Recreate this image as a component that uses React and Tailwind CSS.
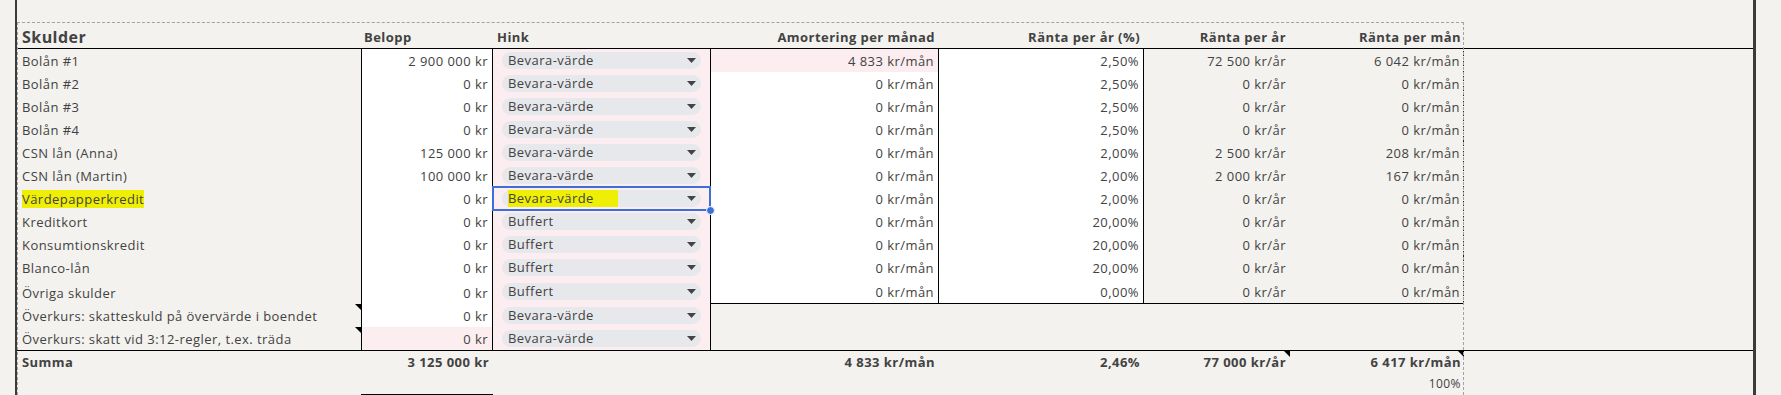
import React from "react";

// Skulder-tabell, kalkylbladsstil
const COLS =
  "grid grid-cols-[344px_132px_218px_228px_205px_146px_174px_289px]";

const rows = [
  { name: "Bolån #1", belopp: "2 900 000 kr", hink: "Bevara-värde", amort: "4 833 kr/mån", rate: "2,50%", ar: "72 500 kr/år", man: "6 042 kr/mån", amortPink: true },
  { name: "Bolån #2", belopp: "0 kr", hink: "Bevara-värde", amort: "0 kr/mån", rate: "2,50%", ar: "0 kr/år", man: "0 kr/mån" },
  { name: "Bolån #3", belopp: "0 kr", hink: "Bevara-värde", amort: "0 kr/mån", rate: "2,50%", ar: "0 kr/år", man: "0 kr/mån" },
  { name: "Bolån #4", belopp: "0 kr", hink: "Bevara-värde", amort: "0 kr/mån", rate: "2,50%", ar: "0 kr/år", man: "0 kr/mån" },
  { name: "CSN lån (Anna)", belopp: "125 000 kr", hink: "Bevara-värde", amort: "0 kr/mån", rate: "2,00%", ar: "2 500 kr/år", man: "208 kr/mån" },
  { name: "CSN lån (Martin)", belopp: "100 000 kr", hink: "Bevara-värde", amort: "0 kr/mån", rate: "2,00%", ar: "2 000 kr/år", man: "167 kr/mån" },
  { name: "Värdepapperkredit", belopp: "0 kr", hink: "Bevara-värde", amort: "0 kr/mån", rate: "2,00%", ar: "0 kr/år", man: "0 kr/mån", selected: true },
  { name: "Kreditkort", belopp: "0 kr", hink: "Buffert", amort: "0 kr/mån", rate: "20,00%", ar: "0 kr/år", man: "0 kr/mån" },
  { name: "Konsumtionskredit", belopp: "0 kr", hink: "Buffert", amort: "0 kr/mån", rate: "20,00%", ar: "0 kr/år", man: "0 kr/mån" },
  { name: "Blanco-lån", belopp: "0 kr", hink: "Buffert", amort: "0 kr/mån", rate: "20,00%", ar: "0 kr/år", man: "0 kr/mån" },
  { name: "Övriga skulder", belopp: "0 kr", hink: "Buffert", amort: "0 kr/mån", rate: "0,00%", ar: "0 kr/år", man: "0 kr/mån", tall: true },
  { name: "Överkurs: skatteskuld på övervärde i boendet", belopp: "0 kr", hink: "Bevara-värde", extra: true, note: true },
  { name: "Överkurs: skatt vid 3:12-regler, t.ex. träda", belopp: "0 kr", hink: "Bevara-värde", extra: true, note: true, beloppPink: true },
];

const Note = () => (
  <span className="absolute top-0 right-0 w-0 h-0 border-l-[6px] border-l-transparent border-t-[6px] border-t-black" />
);

const Chip = ({ label, highlight }) => (
  <div className="flex items-center justify-between h-[17px] rounded-full bg-[#e7e8eb] pl-[6px] pr-[5px]">
    <span className={highlight ? "bg-[#efef05] pr-[24px] leading-[17px]" : "leading-[17px]"}>
      {label}
    </span>
    <svg width="9" height="5" viewBox="0 0 9 5">
      <polygon points="0,0 9,0 4.5,5" fill="#444" />
    </svg>
  </div>
);

export default function App() {
  const cell = "flex items-end pb-[2px] leading-[18px]";
  return (
    <div className="min-h-screen w-full flex bg-[#f3f2ef] text-[#424242] text-[13px] tracking-[0.45px] font-['Open_Sans','Noto_Sans',sans-serif] overflow-hidden">
      <div className="w-[15px] shrink-0" />
      <div className="w-[2px] shrink-0 bg-[#3b3b3b]" />
      <div className="relative w-[1736px] shrink-0">
        <div className="h-[22px]" />

        {/* rubriker */}
        <div className={`${COLS} h-[27px] border-b border-black font-bold`}>
          <div className={`${cell} pl-[5px] text-[16px]`}>Skulder</div>
          <div className={`${cell} pl-[3px]`}>Belopp</div>
          <div className={`${cell} pl-[4px]`}>Hink</div>
          <div className={`${cell} justify-end pr-[4px]`}>Amortering per månad</div>
          <div className={`${cell} justify-end pr-[4px]`}>Ränta per år (%)</div>
          <div className={`${cell} justify-end pr-[4px]`}>Ränta per år</div>
          <div className={`${cell} justify-end pr-[3px]`}>Ränta per mån</div>
          <div />
        </div>

        {rows.map((r) => (
          <div key={r.name} className={`${COLS} ${r.tall ? "h-[25px]" : "h-[23px]"}`}>
            <div className={`${cell} relative pl-[5px] whitespace-nowrap`}>
              <span className={r.selected ? "bg-[#efef05]" : ""}>{r.name}</span>
              {r.note && <Note />}
            </div>
            <div className={`${cell} justify-end pr-[4px] border-x border-black ${r.beloppPink ? "bg-[#fbedf0]" : "bg-white"}`}>
              {r.belopp}
            </div>
            <div className="relative flex items-center px-[9px] border-r border-black bg-[#fbedf0]">
              <div className="w-full">
                <Chip label={r.hink} highlight={r.selected} />
              </div>
              {r.selected && (
                <>
                  <div className="absolute z-10 -inset-y-[1px] -left-[1px] -right-[1px] border-2 border-[#3d6fd9]" />
                  <div className="absolute z-10 -bottom-[5px] -right-[5px] w-[9px] h-[9px] rounded-full bg-[#3d6fd9] border border-white" />
                </>
              )}
            </div>
            {r.extra ? (
              <>
                <div />
                <div />
                <div />
                <div />
              </>
            ) : (
              <>
                <div className={`${cell} justify-end pr-[4px] border-r border-black ${r.tall ? "border-b" : ""} ${r.amortPink ? "bg-[#fbedf0]" : "bg-white"}`}>
                  {r.amort}
                </div>
                <div className={`${cell} justify-end pr-[4px] border-r border-black bg-white ${r.tall ? "border-b" : ""}`}>
                  {r.rate}
                </div>
                <div className={`${cell} justify-end pr-[4px] ${r.tall ? "border-b border-black" : ""}`}>
                  {r.ar}
                </div>
                <div className={`${cell} justify-end pr-[3px] border-r border-r-[#222] [border-right-style:dotted] ${r.tall ? "border-b border-b-black" : ""}`}>
                  {r.man}
                </div>
              </>
            )}
            <div />
          </div>
        ))}

        {/* summa */}
        <div className={`${COLS} h-[23px] border-t border-black font-bold`}>
          <div className={`${cell} pl-[5px]`}>Summa</div>
          <div className={`${cell} justify-end pr-[4px]`}>3 125 000 kr</div>
          <div />
          <div className={`${cell} justify-end pr-[4px]`}>4 833 kr/mån</div>
          <div className={`${cell} justify-end pr-[4px]`}>2,46%</div>
          <div className={`${cell} relative justify-end pr-[4px]`}>
            77 000 kr/år
            <Note />
          </div>
          <div className={`${cell} relative justify-end pr-[3px]`}>
            6 417 kr/mån
            <Note />
          </div>
          <div />
        </div>

        <div className={`${COLS} h-[22px]`}>
          <div />
          <div className="border-b border-black" />
          <div />
          <div />
          <div />
          <div />
          <div className={`${cell} justify-end pr-[3px] text-[12px]`}>100%</div>
          <div />
        </div>

        {/* utskriftsområde */}
        <div className="pointer-events-none absolute top-[22px] left-0 w-[1447px] bottom-0 border-t border-x border-dashed border-[#a3a3a3]" />
      </div>
      <div className="w-[3px] shrink-0 bg-[#3b3b3b]" />
      <div className="flex-1" />
    </div>
  );
}
